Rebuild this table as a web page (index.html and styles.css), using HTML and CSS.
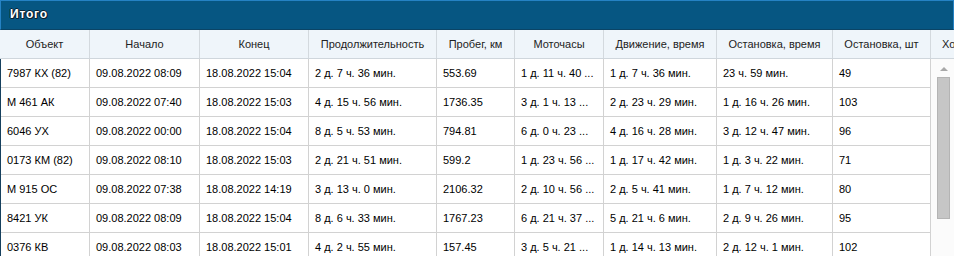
FILE: index.html
```html
<!DOCTYPE html>
<html lang="ru">
<head>
<meta charset="utf-8">
<title>Итого</title>
<link rel="stylesheet" href="styles.css">
</head>
<body>
<div class="panel">
  <div class="title">Итого</div>
  <div class="head">
    <div class="hc">Объект</div>
    <div class="hc">Начало</div>
    <div class="hc">Конец</div>
    <div class="hc">Продолжительность</div>
    <div class="hc">Пробег, км</div>
    <div class="hc">Моточасы</div>
    <div class="hc">Движение, время</div>
    <div class="hc">Остановка, время</div>
    <div class="hc">Остановка, шт</div>
    <div class="hc hc-cut">Хо</div>
  </div>
  <div class="body">
    <div class="rows">
      <div class="row"><div class="c">7987 КХ (82)</div><div class="c">09.08.2022 08:09</div><div class="c">18.08.2022 15:04</div><div class="c">2 д. 7 ч. 36 мин.</div><div class="c">553.69</div><div class="c">1 д. 11 ч. 40 ...</div><div class="c">1 д. 7 ч. 36 мин.</div><div class="c">23 ч. 59 мин.</div><div class="c">49</div></div>
      <div class="row"><div class="c">М 461 АК</div><div class="c">09.08.2022 07:40</div><div class="c">18.08.2022 15:03</div><div class="c">4 д. 15 ч. 56 мин.</div><div class="c">1736.35</div><div class="c">3 д. 1 ч. 13 ...</div><div class="c">2 д. 23 ч. 29 мин.</div><div class="c">1 д. 16 ч. 26 мин.</div><div class="c">103</div></div>
      <div class="row"><div class="c">6046 УХ</div><div class="c">09.08.2022 00:00</div><div class="c">18.08.2022 15:04</div><div class="c">8 д. 5 ч. 53 мин.</div><div class="c">794.81</div><div class="c">6 д. 0 ч. 23 ...</div><div class="c">4 д. 16 ч. 28 мин.</div><div class="c">3 д. 12 ч. 47 мин.</div><div class="c">96</div></div>
      <div class="row"><div class="c">0173 КМ (82)</div><div class="c">09.08.2022 08:10</div><div class="c">18.08.2022 15:03</div><div class="c">2 д. 21 ч. 51 мин.</div><div class="c">599.2</div><div class="c">1 д. 23 ч. 56 ...</div><div class="c">1 д. 17 ч. 42 мин.</div><div class="c">1 д. 3 ч. 22 мин.</div><div class="c">71</div></div>
      <div class="row"><div class="c">М 915 ОС</div><div class="c">09.08.2022 07:38</div><div class="c">18.08.2022 14:19</div><div class="c">3 д. 13 ч. 0 мин.</div><div class="c">2106.32</div><div class="c">2 д. 10 ч. 56 ...</div><div class="c">2 д. 5 ч. 41 мин.</div><div class="c">1 д. 7 ч. 12 мин.</div><div class="c">80</div></div>
      <div class="row"><div class="c">8421 УК</div><div class="c">09.08.2022 08:09</div><div class="c">18.08.2022 15:04</div><div class="c">8 д. 6 ч. 33 мин.</div><div class="c">1767.23</div><div class="c">6 д. 21 ч. 37 ...</div><div class="c">5 д. 21 ч. 6 мин.</div><div class="c">2 д. 9 ч. 26 мин.</div><div class="c">95</div></div>
      <div class="row"><div class="c">0376 КВ</div><div class="c">09.08.2022 08:03</div><div class="c">18.08.2022 15:01</div><div class="c">4 д. 2 ч. 55 мин.</div><div class="c">157.45</div><div class="c">3 д. 5 ч. 21 ...</div><div class="c">1 д. 14 ч. 13 мин.</div><div class="c">2 д. 12 ч. 1 мин.</div><div class="c">102</div></div>
    </div>
    <div class="scroll">
      <div class="arrow"></div>
      <div class="thumb"></div>
    </div>
  </div>
</div>
</body>
</html>
```
FILE: styles.css
```css
html, body {
  margin: 0;
  padding: 0;
  background: #ffffff;
  overflow: hidden;
}
body {
  width: 954px;
  height: 256px;
  font-family: "Liberation Sans", Arial, sans-serif;
  font-size: 11px;
  color: #000;
}
.panel {
  width: 954px;
  display: flex;
  flex-direction: column;
}
.title {
  box-sizing: border-box;
  height: 30px;
  background: #065682;
  border: 1px solid #2582c4;
  border-bottom-color: #0a4466;
  color: #fff;
  font-weight: bold;
  font-size: 12px;
  line-height: 27px;
  padding-left: 9px;
  letter-spacing: 0.8px;
  text-shadow: 1px 0 0 #0b2233, -1px 0 0 #0b2233, 0 1px 0 #0b2233, 0 -1px 0 #0b2233, 1px 1px 0 #0b2233;
}
.head {
  display: grid;
  grid-template-columns: 90px 110px 109px 128px 78px 89px 113px 116px 98px 1fr;
  height: 28px;
  background: #eff5fa;
  border-bottom: 1px solid #cfd6dc;
  overflow: hidden;
}
.hc {
  box-sizing: border-box;
  border-right: 1px solid #d3d9de;
  text-align: center;
  line-height: 28px;
  color: #222;
  white-space: nowrap;
  overflow: hidden;
}
.hc-cut {
  text-align: left;
  padding-left: 11px;
  border-right: none;
}
.body {
  display: flex;
  height: 198px;
  overflow: hidden;
}
.rows {
  width: 931px;
  border-left: 1px solid #16405e;
  box-sizing: border-box;
}
.row {
  display: grid;
  grid-template-columns: 89px 110px 109px 128px 78px 89px 113px 116px 98px;
  height: 29px;
  box-sizing: border-box;
  border-bottom: 1px solid #d2d2d2;
}
.c {
  box-sizing: border-box;
  border-right: 1px solid #d2d2d2;
  padding-left: 6px;
  line-height: 28px;
  white-space: nowrap;
  overflow: hidden;
}
.scroll {
  flex: 1;
  position: relative;
  background: #fbfbfb;
  display: flex;
  flex-direction: column;
  align-items: center;
  padding-left: 2px;
}
.arrow {
  margin-top: 8px;
  width: 0;
  height: 0;
  border-left: 4px solid transparent;
  border-right: 4px solid transparent;
  border-bottom: 4px solid #a8a8a8;
}
.thumb {
  margin-top: 6px;
  width: 13px;
  height: 142px;
  box-sizing: border-box;
  background: #c6c6c6;
  border: 1px solid #b4b4b4;
}
```
